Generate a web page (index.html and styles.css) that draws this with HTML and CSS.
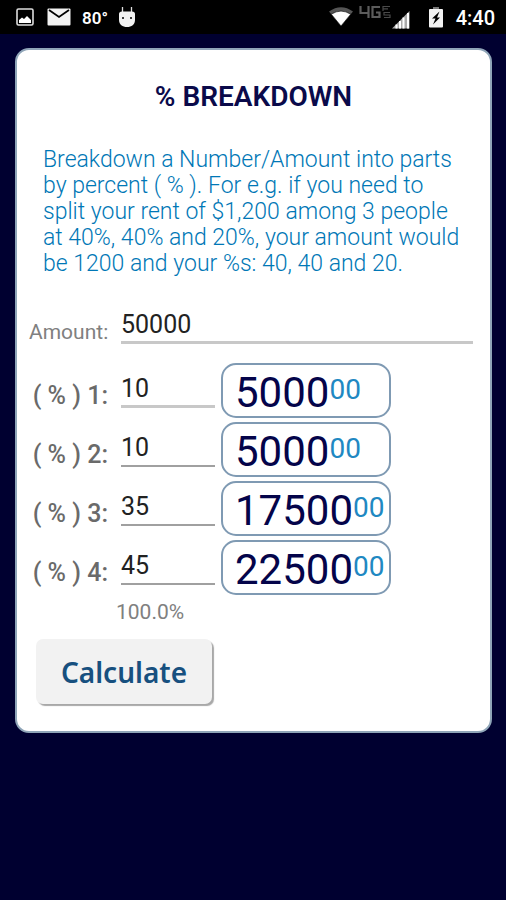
FILE: index.html
```html
<!DOCTYPE html>
<html lang="en">
<head>
<meta charset="utf-8">
<meta name="viewport" content="width=device-width, initial-scale=1">
<title>% Breakdown</title>
<link rel="stylesheet" href="styles.css">
</head>
<body>
<header class="status">
  <div class="status-left">
    <svg width="18" height="18" viewBox="0 0 18 18" aria-hidden="true">
      <rect x="1" y="1" width="16" height="16" rx="1.5" fill="none" stroke="#ddd" stroke-width="1.6"/>
      <path d="M3 15V12l3-2.500 2 1.500 3-3 4 4v3z" fill="#fff"/>
    </svg>
    <svg width="24" height="18" viewBox="0 0 24 18" aria-hidden="true">
      <rect x="0.500" y="0.500" width="23" height="17" rx="1" fill="#f2f2f2"/>
      <path d="M2 2l10 7 10-7" fill="none" stroke="#000" stroke-width="1.800"/>
    </svg>
    <span class="temp">80°</span>
    <svg width="18" height="22" viewBox="0 0 18 22" aria-hidden="true">
      <path d="M4.500 1v6M13.500 1v6" stroke="#ddd" stroke-width="1.300"/>
      <path d="M1 8Q1 5.500 4 5.500H14Q17 5.500 17 8V14C17 18.500 13.500 21 9 21S1 18.500 1 14Z" fill="#f2f2f2"/>
      <circle cx="5" cy="12" r="1" fill="#000"/><circle cx="13" cy="12" r="1" fill="#000"/>
    </svg>
  </div>
  <div class="status-right">
    <svg class="wifi" width="24" height="20" viewBox="0 0 24 20" aria-hidden="true">
      <path d="M0 4.500Q12-4 24 4.500L12 19Z" fill="#555"/>
      <path d="M2.300 7.200Q12 1 21.700 7.200L12 19Z" fill="#fff" stroke="#000" stroke-width="0.600"/>
    </svg>
    <svg class="network" width="32" height="14" viewBox="0 0 32 14" aria-hidden="true">
      <path d="M1.500 1V8H10M9.500 1V13M21 2H13.500V12H20.500V7.500H17" fill="none" stroke="#5c5c5c" stroke-width="2.200"/>
      <path d="M24 1.500H31M24 1V6M24 3.800H29M31 7.500H25V10H31V12.500H25" fill="none" stroke="#4a4a4a" stroke-width="1.200"/>
    </svg>
    <svg class="signal" width="18" height="18" viewBox="0 0 18 18" aria-hidden="true">
      <path d="M0 17.500L17.500 0V17.500Z" fill="#aaa"/>
      <path d="M4.500 13.500V17.500M8 10V17.500M11.500 6.500V17.500M16 2V17.500" stroke="#fff" stroke-width="2"/>
    </svg>
    <svg class="battery" width="16" height="21" viewBox="0 0 16 21" aria-hidden="true">
      <rect x="5" y="0" width="6" height="3" fill="#777"/>
      <rect x="1" y="2" width="14" height="18.500" rx="1" fill="#f2f2f2"/>
      <path d="M11.500 4.500L4 11.500H7.500L5 17.500L12 10.500H9Z" fill="#000"/>
    </svg>
    <time class="clock">4:40</time>
  </div>
</header>

<main class="card">
  <h1>% BREAKDOWN</h1>
  <p class="intro">Breakdown a Number/Amount into parts by percent ( % ). For e.g. if you need to split your rent of $1,200 among 3 people at 40%, 40% and 20%, your amount would be 1200 and your %s: 40, 40 and 20.</p>
  <form>
    <div class="row amount">
      <label for="amount">Amount:</label>
      <input id="amount" type="text" value="50000">
    </div>
    <div class="row">
      <label for="p1">( % ) 1:</label>
      <input id="p1" type="text" value="10">
      <output for="amount p1">5000<small>00</small></output>
    </div>
    <div class="row thin">
      <label for="p2">( % ) 2:</label>
      <input id="p2" type="text" value="10">
      <output for="amount p2">5000<small>00</small></output>
    </div>
    <div class="row thin">
      <label for="p3">( % ) 3:</label>
      <input id="p3" type="text" value="35">
      <output for="amount p3">17500<small>00</small></output>
    </div>
    <div class="row thin">
      <label for="p4">( % ) 4:</label>
      <input id="p4" type="text" value="45">
      <output for="amount p4">22500<small>00</small></output>
    </div>
    <div class="total">100.0%</div>
    <button type="button">Calculate</button>
  </form>
</main>
</body>
</html>
```

FILE: styles.css
```css
* { box-sizing: border-box; }

body {
  margin: 0;
  min-height: 100vh;
  background: #000030;
  font-family: Roboto, "Liberation Sans", sans-serif;
}

.status {
  display: flex;
  justify-content: space-between;
  height: 34px;
  padding: 0 11px 0 16px;
  background: #000;
  color: #fff;
}

.status-left,
.status-right {
  display: flex;
  align-items: center;
}

.status-left { gap: 13px; }
.temp { font-size: 17px; font-weight: 600; margin: 2px -3px 0 -2px; }
.network { align-self: flex-start; margin: 5px 0 0 6px; }
.signal { margin: 5px 0 0 1px; }
.battery { margin-left: 18px; }
.clock { margin: 2px 0 0 12px; font-size: 20px; font-weight: 500; }

.card {
  margin: 14px 14px 0 15px;
  padding: 32px 17px 27px 12px;
  border: 2px solid #8fa5b8;
  border-radius: 14px;
  background: #fff;
}

h1 {
  margin: 0 -5px 35px 0;
  text-align: center;
  font-size: 28px;
  line-height: 30px;
  font-weight: 600;
  color: #0a0a4a;
}

.intro {
  margin: 0 0 22px;
  padding: 0 10px 0 14px;
  font-size: 23px;
  line-height: 26px;
  font-weight: 300;
  color: #0077b6;
}

.row {
  display: grid;
  grid-template-columns: 79px 94px 170px;
  column-gap: 13px;
  align-items: start;
  height: 55px;
  margin-bottom: 4px;
}

.row label {
  padding-top: 18px;
  text-align: right;
  white-space: nowrap;
  font-size: 25px;
  line-height: 30px;
  font-weight: 500;
  color: #6a6a6a;
}

.row input {
  width: 100%;
  height: 45px;
  padding: 8px 0 0;
  border: 0;
  border-bottom: 3px solid #c8c8c8;
  background: none;
  font: 25px/30px Roboto, "Liberation Sans", sans-serif;
  color: #222;
  outline: 0;
}

.row.thin input { border-bottom: 2px solid #a0a0a0; }

.row.amount {
  grid-template-columns: 79px 1fr;
  height: 60px;
}

.row.amount label {
  font-size: 21px;
  font-weight: 400;
  color: #808080;
}

output {
  display: flex;
  align-items: flex-start;
  height: 55px;
  margin-left: -7px;
  width: 170px;
  padding: 4px 0 0 12px;
  border: 2px solid #7f9ab3;
  border-radius: 15px;
  font-size: 42px;
  line-height: 48px;
  color: #04044a;
}

output small {
  font-size: 28px;
  line-height: 42px;
  color: #2088c2;
}

.total {
  padding-left: 87px;
  font-size: 21px;
  line-height: 26px;
  color: #808080;
}

button {
  display: block;
  width: 176px;
  height: 65px;
  margin: 14px 0 0 7px;
  padding: 0;
  border: 0;
  border-radius: 7px;
  background: #f2f2f2;
  box-shadow: 2px 2px 1px #a8a8a8;
  font: 600 28px/40px "Noto Sans", "Open Sans", sans-serif;
  color: #17507f;
}
```
